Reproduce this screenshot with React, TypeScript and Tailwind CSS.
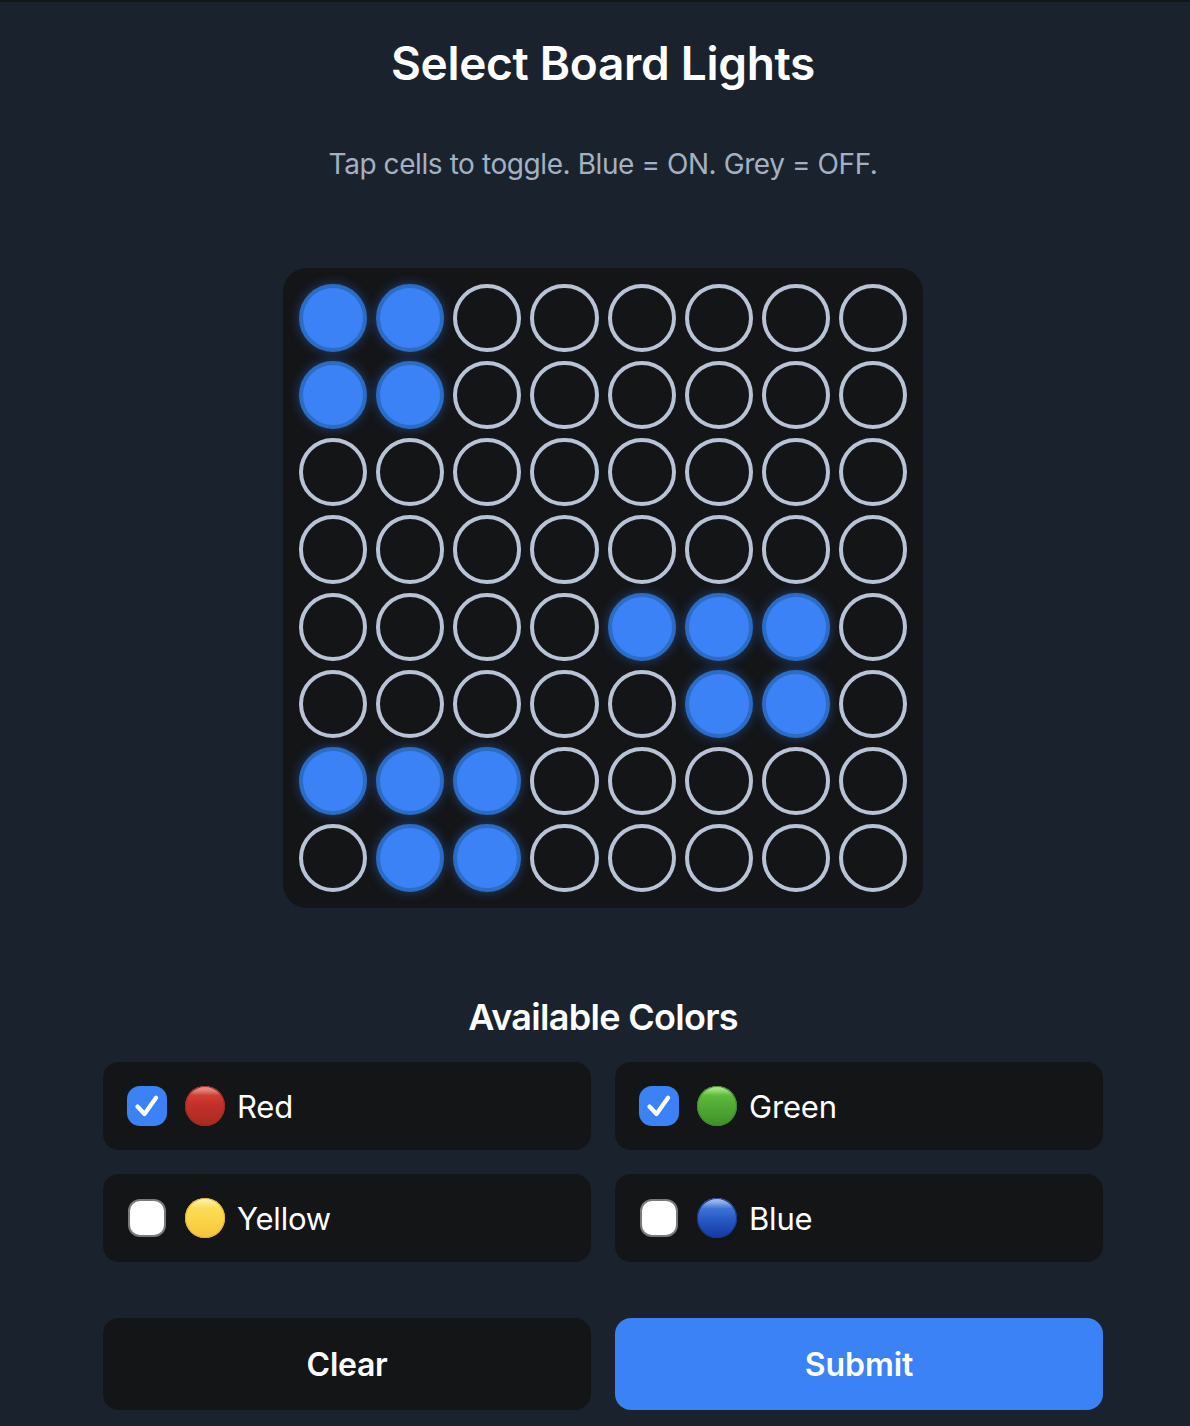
import React from "react";

const lit = new Set([
  "0-0", "0-1", "1-0", "1-1",
  "4-4", "4-5", "4-6", "5-5", "5-6",
  "6-0", "6-1", "6-2", "7-1", "7-2",
]);

const cells = Array.from({ length: 8 }, (_, row) =>
  Array.from({ length: 8 }, (_, col) => lit.has(`${row}-${col}`))
).flat();

const colors = [
  {
    name: "Red",
    checked: true,
    dot: "bg-[linear-gradient(180deg,#e9938a_0%,#e07d72_12%,#cf3f33_24%,#c5302a_45%,#a62b20_100%)] shadow-[inset_0_0_0_1px_#9e2a20]",
  },
  {
    name: "Green",
    checked: true,
    dot: "bg-[linear-gradient(180deg,#b4eb9a_0%,#90db70_12%,#5cbb38_24%,#52aa35_50%,#3f8f2b_100%)] shadow-[inset_0_0_0_1px_#3f8a2b]",
  },
  {
    name: "Yellow",
    checked: false,
    dot: "bg-[linear-gradient(180deg,#fdf3b0_0%,#fdea8a_12%,#fcdc58_24%,#fad646_55%,#f2c53d_100%)] shadow-[inset_0_0_0_1px_#e2b038]",
  },
  {
    name: "Blue",
    checked: false,
    dot: "bg-[linear-gradient(180deg,#aac6f2_0%,#86a9e8_12%,#3f74d6_26%,#2a5cc8_50%,#1538a0_100%)] shadow-[inset_0_0_0_1px_#17398f]",
  },
];

function ColorRow({ name, checked, dot }: { name: string; checked: boolean; dot: string }) {
  return (
    <div className="flex h-[88px] items-center rounded-2xl bg-[#141517] pl-6">
      <div className="flex w-10 justify-center">
        {checked ? (
          <div className="h-10 w-10 rounded-[13px] bg-[#3b82f6]">
            <svg width="40" height="40" viewBox="0 0 40 40" fill="none">
              <path
                d="M10.5 20.5L17.5 28L29 11.8"
                stroke="white"
                strokeWidth="4.2"
                strokeLinecap="round"
                strokeLinejoin="round"
              />
            </svg>
          </div>
        ) : (
          <div className="h-[38px] w-[38px] rounded-xl border-2 border-[#7a7a7a] bg-white" />
        )}
      </div>
      <div className={`ml-[18px] h-10 w-10 rounded-full ${dot}`} />
      <span className="ml-3 pt-[3px] text-[31px] tracking-[-0.2px] text-white">{name}</span>
    </div>
  );
}

export default function App() {
  return (
    <main className="h-[1426px] overflow-hidden border-t-2 border-[#141517] bg-[#1a232d] pl-[103px] pr-[87px] font-['Inter','Liberation_Sans',sans-serif]">
      <h1 className="mt-[33px] text-center text-[46px] leading-[56px] font-semibold tracking-[-0.3px] text-white">
        Select Board Lights
      </h1>
      <p className="mt-[55px] text-center text-[28px] leading-[36px] tracking-[-0.42px] text-[#a3b1c2]">
        Tap cells to toggle. Blue = ON. Grey = OFF.
      </p>

      <div className="mx-auto mt-[86px] grid h-[640px] w-[640px] grid-cols-8 grid-rows-8 gap-[9px] rounded-3xl bg-[#141517] p-4">
        {cells.map((on, i) => (
          <div
            key={i}
            className={
              on
                ? "rounded-full border-4 border-[#2b6cc4] bg-[#3b82f6] shadow-[0_0_12px_rgba(59,130,246,0.4)]"
                : "rounded-full border-4 border-[#b8c4d6] bg-transparent"
            }
          />
        ))}
      </div>

      <h2 className="mt-[87px] text-center text-[36px] leading-[44px] font-semibold tracking-[-0.7px] text-white">
        Available Colors
      </h2>

      <div className="mt-[23px] grid grid-cols-2 gap-6">
        {colors.map((c) => (
          <ColorRow key={c.name} name={c.name} checked={c.checked} dot={c.dot} />
        ))}
      </div>

      <div className="mt-14 grid grid-cols-2 gap-6">
        <button className="h-[92px] rounded-2xl bg-[#141517] pt-0.5 text-[32px] font-semibold tracking-[-0.3px] text-white">
          Clear
        </button>
        <button className="h-[92px] rounded-2xl bg-[#3b82f6] pt-0.5 text-[32px] font-semibold tracking-[-0.1px] text-white">
          Submit
        </button>
      </div>
    </main>
  );
}
